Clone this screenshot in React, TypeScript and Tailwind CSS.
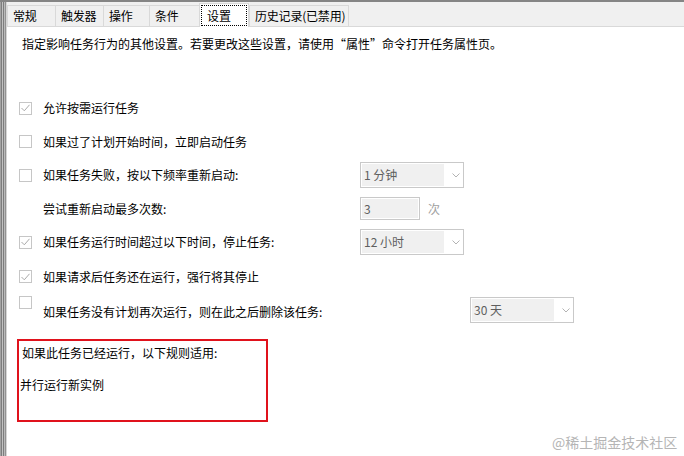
import React from 'react';

const tabs = [
  { label: '常规', w: 'w-[48px]' },
  { label: '触发器', w: 'w-[48px]' },
  { label: '操作', w: 'w-[46px]' },
  { label: '条件', w: 'w-[50px]' },
  { label: '设置', w: 'w-[50px]', active: true },
  { label: '历史记录(已禁用)', w: 'w-[100px]' },
];

function CheckBox({ checked }: { checked?: boolean }) {
  return (
    <div className="w-[13px] h-[13px] border border-[#c6c6c6] bg-white flex items-center justify-center shrink-0">
      {checked && (
        <svg width="9" height="8" viewBox="0 0 9 8">
          <polyline points="0.5,4 3.3,6.8 8.5,0.8" fill="none" stroke="#a9a9a9" strokeWidth="1" />
        </svg>
      )}
    </div>
  );
}

function Select({ value }: { value: string }) {
  return (
    <div className="w-[104px] h-[26px] border border-[#c9c9c9] bg-white flex items-center p-px">
      <div className="w-[82px] h-full bg-[#f0f0f0] flex items-center pl-[2px] text-[#5f5f5f]">{value}</div>
      <svg width="8" height="5" viewBox="0 0 8 5" className="ml-[8px]">
        <polyline points="0.5,0.5 4,4 7.5,0.5" fill="none" stroke="#b3b3b3" strokeWidth="1" />
      </svg>
    </div>
  );
}

export default function App() {
  return (
    <div className="w-[684px] h-[456px] bg-white flex flex-col overflow-hidden relative font-['Noto_Sans_CJK_SC','Microsoft_YaHei',sans-serif] text-[12px] leading-[16px] text-black">
      {/* top edge */}
      <div className="h-[2px] bg-[#858585] shrink-0" />
      <div className="flex flex-1 min-h-0">
        {/* left edge stripes */}
        <div className="flex shrink-0">
          <div className="w-px bg-[#a3a3a3]" />
          <div className="w-px bg-[#7d7d7d]" />
          <div className="w-px bg-[#c2c2c2]" />
          <div className="w-px bg-[#7d7d7d]" />
          <div className="w-px bg-[#bababa]" />
          <div className="w-px bg-[#929292]" />
          <div className="w-px bg-[#d6d6d6]" />
        </div>

        <div className="flex-1 flex flex-col">
          {/* tab strip */}
          <div className="h-[25px] bg-[#f0f0f0] border-b border-[#d9d9d9] flex items-end shrink-0">
            {tabs.map((t) =>
              t.active ? (
                <div
                  key={t.label}
                  className={`${t.w} h-[24px] -mb-px bg-white border-t border-l border-r border-[#d9d9d9] relative z-10 flex items-start justify-center pt-px shrink-0`}
                >
                  <div className="w-[46px] h-[21px] border border-dotted border-black flex items-center pl-[5px]">{t.label}</div>
                </div>
              ) : (
                <div
                  key={t.label}
                  className={`${t.w} h-[21px] border-t border-l border-[#d9d9d9] flex items-center pl-[5px] whitespace-nowrap shrink-0 last:border-r tracking-[-0.2px]`}
                >
                  {t.label}
                </div>
              )
            )}
          </div>

          {/* content */}
          <div className="flex flex-col">
            <div className="pl-[15px] mt-[9px] h-[16px]">
              指定影响任务行为的其他设置。若要更改这些设置，请使用“属性”命令打开任务属性页。
            </div>

            <div className="mt-[39px] h-[34px] flex items-center pl-[12px]">
              <CheckBox checked />
              <span className="ml-[11px]">允许按需运行任务</span>
            </div>
            <div className="h-[33px] flex items-center pl-[12px]">
              <CheckBox />
              <span className="ml-[11px]">如果过了计划开始时间，立即启动任务</span>
            </div>
            <div className="h-[34px] flex items-center pl-[12px]">
              <CheckBox />
              <span className="ml-[11px] w-[317px]">如果任务失败，按以下频率重新启动:</span>
              <Select value="1 分钟" />
            </div>
            <div className="h-[33px] flex items-center pl-[36px]">
              <span className="w-[317px]">尝试重新启动最多次数:</span>
              <div className="w-[60px] h-[23px] border border-[#c9c9c9] bg-white p-px">
                <div className="h-full bg-[#f0f0f0] flex items-center pl-[2px] text-[#5f5f5f]">3</div>
              </div>
              <span className="ml-[8px] text-[#a0a0a0]">次</span>
            </div>
            <div className="h-[34px] flex items-center pl-[12px]">
              <CheckBox checked />
              <span className="ml-[11px] w-[317px]">如果任务运行时间超过以下时间，停止任务:</span>
              <Select value="12 小时" />
            </div>
            <div className="h-[35px] flex items-center pl-[12px]">
              <CheckBox checked />
              <span className="ml-[11px]">如果请求后任务还在运行，强行将其停止</span>
            </div>
            <div className="h-[30px] flex items-start pl-[12px] pt-[2px]">
              <CheckBox />
              <span className="ml-[11px] w-[427px] mt-[8px]">如果任务没有计划再次运行，则在此之后删除该任务:</span>
              <div className="mt-px">
                <Select value="30 天" />
              </div>
            </div>

            {/* highlighted box */}
            <div className="ml-[10px] mt-[15px] w-[251px] h-[83px] border-2 border-[#e0121c] flex flex-col">
              <div className="pl-[3px] pt-[4px]">如果此任务已经运行，以下规则适用:</div>
              <div className="pl-px mt-[16px]">并行运行新实例</div>
            </div>
          </div>
        </div>
      </div>

      {/* watermark */}
      <div className="absolute left-[552px] top-[433px] text-[14px] leading-[18px] text-[#b5b5b5]">@稀土掘金技术社区</div>
    </div>
  );
}
